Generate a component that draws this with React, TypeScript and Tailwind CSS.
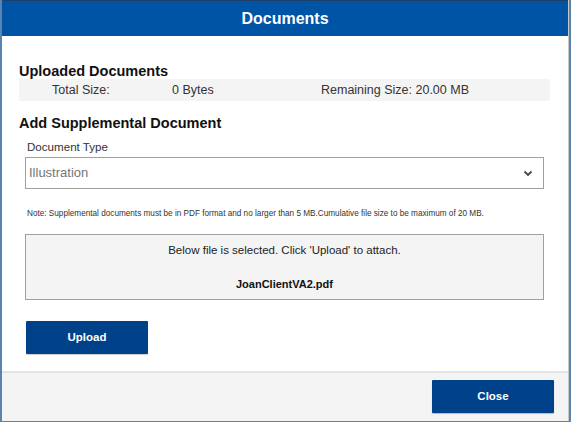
export default function App() {
  return (
    <div
      className="flex h-[422px] w-[571px] flex-col bg-[#5a84b0] pb-[1px] pl-[2px] pr-[2px]"
      style={{ fontFamily: '"Liberation Sans", Arial, sans-serif' }}
    >
      <div className="flex flex-1 flex-col border-r border-[#c9c9c9] bg-white">
        <div className="flex h-[36px] items-center justify-center border-t border-[#1d3f68] bg-[#0054a6]">
          <h1 className="text-[16px] font-bold text-white">Documents</h1>
        </div>

        <div className="flex flex-1 flex-col px-[17px] pt-[27px] text-[#222]">
          <h2 className="text-[14.5px] font-bold leading-[16px] text-[#111]">Uploaded Documents</h2>
          <div className="mr-[1px] flex h-[22px] items-center bg-[#f4f4f4] text-[12.5px] text-[#333]">
            <span className="ml-[33px] w-[120px]">Total Size:</span>
            <span className="w-[149px]">0 Bytes</span>
            <span>Remaining Size: 20.00 MB</span>
          </div>

          <h2 className="mt-[14px] text-[14.5px] font-bold leading-[16px] text-[#111]">
            Add Supplemental Document
          </h2>
          <label className="ml-[8px] mt-[9px] text-[11.6px] leading-[14px] text-[#333]">Document Type</label>
          <div className="ml-[6px] mt-[3px] flex h-[32px] w-[519px] items-center justify-between border border-[#a0a0a0] bg-white pl-[3px] pr-[10px]">
            <span className="text-[13px] text-[#767676]">Illustration</span>
            <svg width="10" height="7" viewBox="0 0 10 7">
              <polyline points="1.5,1.5 5,5 8.5,1.5" fill="none" stroke="#444" strokeWidth="1.8" />
            </svg>
          </div>

          <p className="ml-[8px] mt-[20px] text-[8.2px] leading-[10px] text-[#333]">
            Note: Supplemental documents must be in PDF format and no larger than 5 MB.Cumulative file size to be maximum of 20 MB.
          </p>

          <div className="ml-[6px] mt-[15px] flex h-[66px] w-[519px] flex-col items-center border border-[#a0a0a0] bg-[#f4f4f4] pt-[8px]">
            <span className="text-[11.5px] leading-[14px] text-[#222]">
              Below file is selected. Click 'Upload' to attach.
            </span>
            <span className="mt-[20px] text-[11px] font-bold leading-[14px] text-[#111]">JoanClientVA2.pdf</span>
          </div>

          <button className="ml-[7px] mt-[21px] flex h-[33px] w-[122px] items-center justify-center rounded-[1px] bg-[#00428a] text-[11.5px] font-bold text-white shadow-[0_1px_1px_rgba(0,0,0,0.2)]">
            Upload
          </button>
        </div>

        <div className="flex h-[50px] justify-end border-t-2 border-[#e3e3e3] bg-[#f4f4f4] pr-[14px] pt-[7px]">
          <button className="flex h-[33px] w-[122px] items-center justify-center rounded-[1px] bg-[#00428a] text-[11.5px] font-bold text-white shadow-[0_1px_1px_rgba(0,0,0,0.25)]">
            Close
          </button>
        </div>
      </div>
    </div>
  );
}
